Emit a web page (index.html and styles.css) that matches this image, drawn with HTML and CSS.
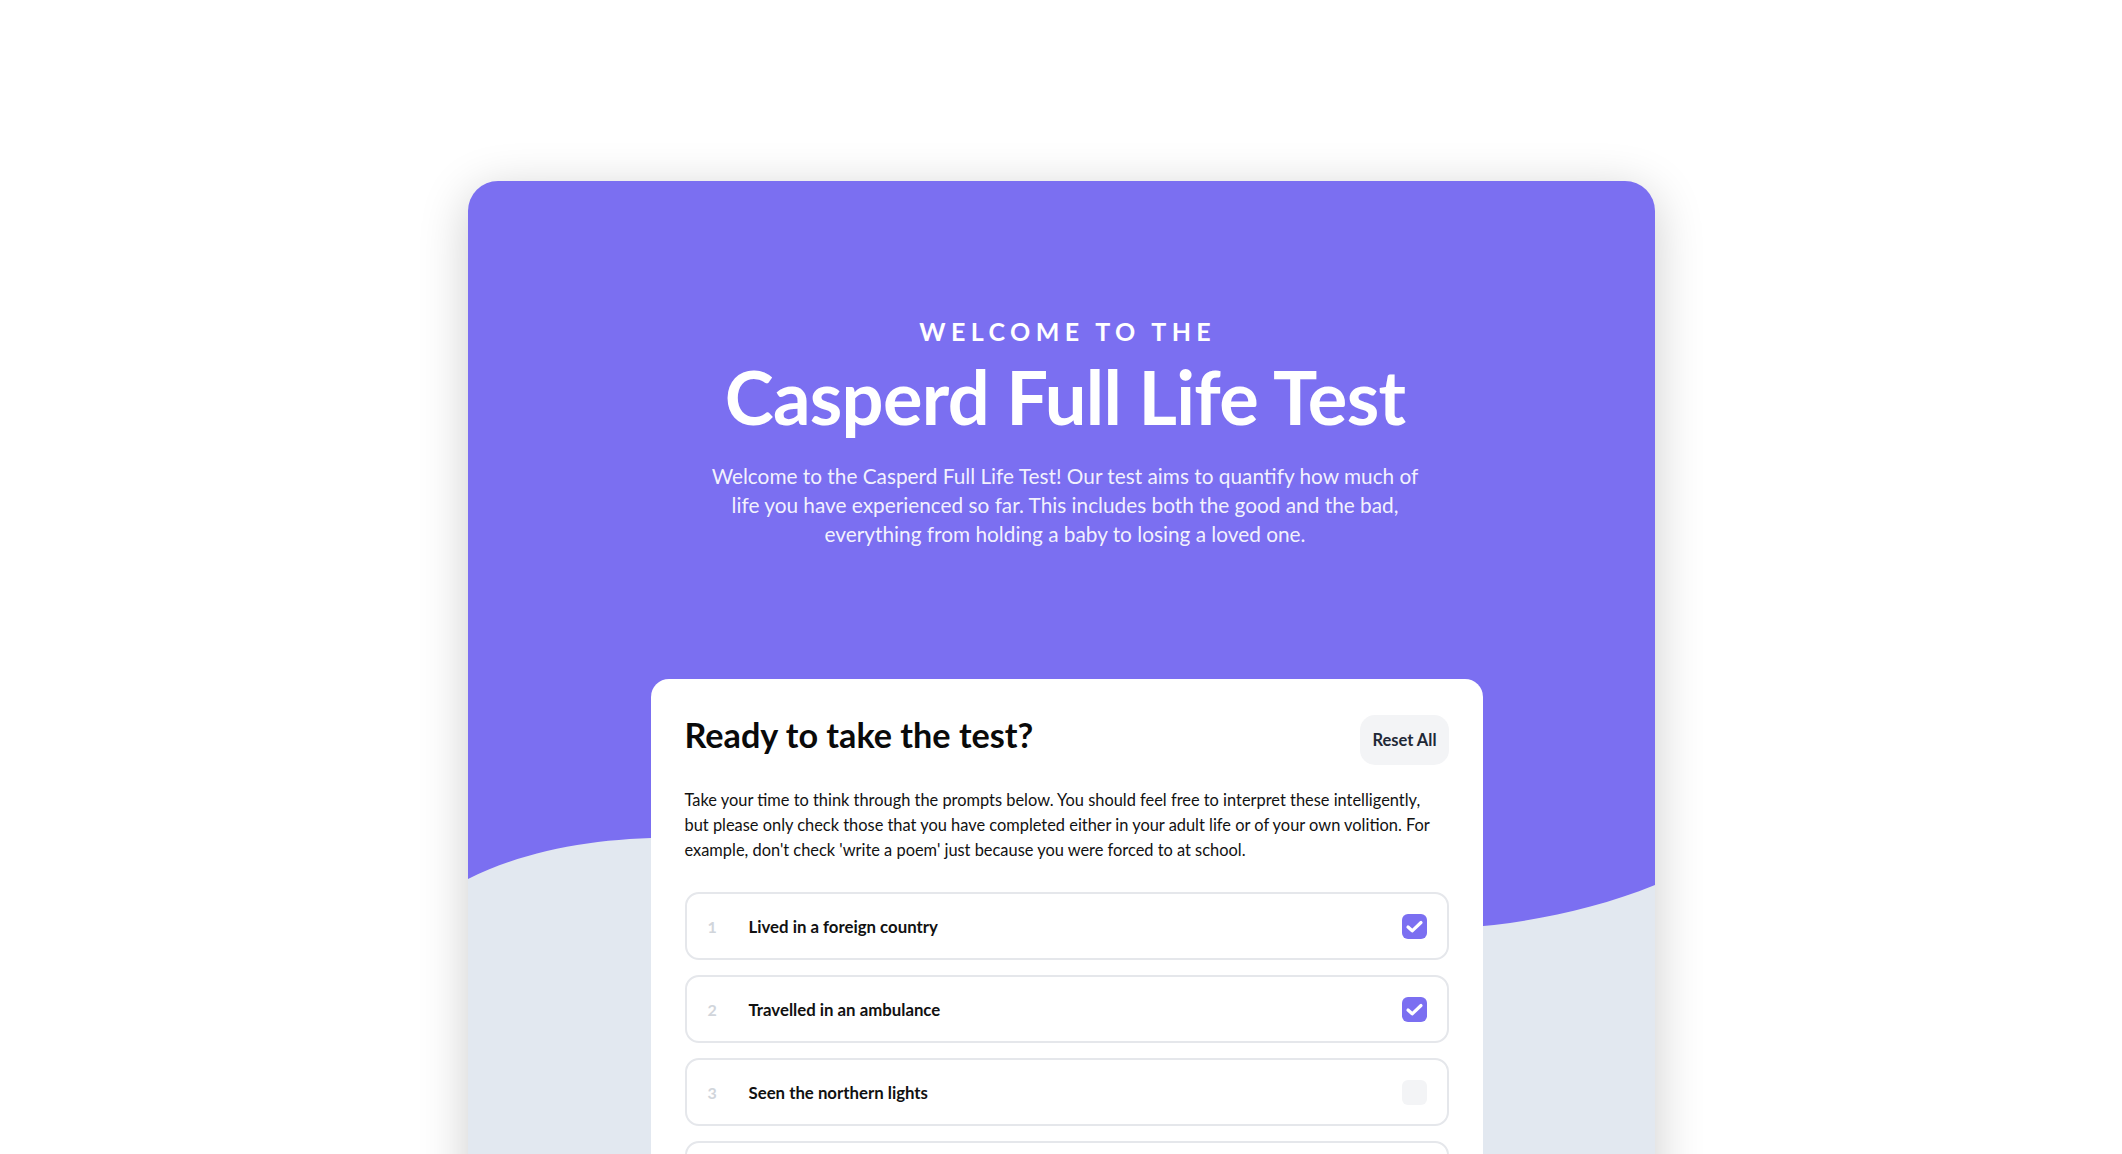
FILE: index.html
```html
<!DOCTYPE html>
<html lang="en">
<head>
<meta charset="utf-8">
<title>Casperd Full Life Test</title>
<link rel="stylesheet" href="styles.css">
</head>
<body>
<div class="frame">
  <svg class="wave" viewBox="0 0 1187 1400" preserveAspectRatio="none" aria-hidden="true">
    <path d="M0,698 C300,550 800,860 1187,704 L1187,1400 L0,1400 Z" fill="#E2E8F0"/>
  </svg>
  <header class="hero">
    <p class="eyebrow">Welcome to the</p>
    <h1 class="title">Casperd Full Life Test</h1>
    <p class="lead">Welcome to the Casperd Full Life Test! Our test aims to quantify how much of life you have experienced so far. This includes both the good and the bad, everything from holding a baby to losing a loved one.</p>
  </header>
  <main class="card">
    <div class="card-head">
      <h2 class="card-title">Ready to take the test?</h2>
      <button class="reset" type="button">Reset All</button>
    </div>
    <p class="intro">Take your time to think through the prompts below. You should feel free to interpret these intelligently, but please only check those that you have completed either in your adult life or of your own volition. For example, don't check 'write a poem' just because you were forced to at school.</p>
    <ol class="items">
      <li class="item"><span class="num">1</span><span class="label">Lived in a foreign country</span><span class="box checked"><svg viewBox="0 0 25 25"><path d="M6 13 L10.2 16.8 L19 8.5"/></svg></span></li>
      <li class="item"><span class="num">2</span><span class="label">Travelled in an ambulance</span><span class="box checked"><svg viewBox="0 0 25 25"><path d="M6 13 L10.2 16.8 L19 8.5"/></svg></span></li>
      <li class="item"><span class="num">3</span><span class="label">Seen the northern lights</span><span class="box"></span></li>
      <li class="item"><span class="num">4</span><span class="label">Written a poem</span><span class="box"></span></li>
      <li class="item"><span class="num">5</span><span class="label">Run a marathon</span><span class="box"></span></li>
    </ol>
  </main>
</div>
</body>
</html>
```
FILE: styles.css
```css
* { box-sizing: border-box; }
html, body { margin: 0; padding: 0; background: #ffffff; }
body { font-family: "Lato", "Noto Sans", sans-serif; color: #111111; overflow: hidden; }

.frame {
  position: relative;
  width: 1187px;
  margin: 181px auto 0;
  padding-bottom: 60px;
  background: #7B6FF1;
  border-radius: 30px;
  box-shadow: 0 10px 50px rgba(0, 0, 0, 0.2);
  overflow: hidden;
}

.wave {
  position: absolute;
  left: 0;
  top: 0;
  width: 100%;
  height: 1400px;
  z-index: 0;
}

.hero {
  position: relative;
  z-index: 1;
  padding: 134px 0 0 8px;
  text-align: center;
  color: #ffffff;
}

.eyebrow {
  margin: 0;
  font-size: 25px;
  line-height: 32px;
  font-weight: 700;
  letter-spacing: 5.4px;
  text-transform: uppercase;
  padding-left: 5.4px;
}

.title {
  margin: 8px 0 0;
  font-size: 74px;
  line-height: 84px;
  font-weight: 700;
  letter-spacing: -0.7px;
}

.lead {
  width: 716px;
  margin: 22px auto 0;
  font-size: 20.8px;
  line-height: 29px;
  color: rgba(255, 255, 255, 0.92);
}

.card {
  position: relative;
  z-index: 1;
  width: 832px;
  margin: 131px 0 0 183px;
  padding: 36px 34px 40px;
  background: #ffffff;
  border-radius: 18px;
}

.card-head {
  display: flex;
  align-items: center;
  justify-content: space-between;
}

.card-title {
  margin: 0 0 10px;
  font-size: 34.2px;
  line-height: 40px;
  font-weight: 700;
  color: #0a0a0a;
}

.reset {
  height: 50px;
  padding: 0 12px;
  border: none;
  border-radius: 15px;
  background: #F3F4F6;
  color: #1F2937;
  font-family: inherit;
  font-size: 16.5px;
  font-weight: 700;
}

.intro {
  margin: 22px 0 0;
  font-size: 16.4px;
  line-height: 25px;
  color: #111111;
}

.items {
  list-style: none;
  margin: 30px 0 0;
  padding: 0;
  display: flex;
  flex-direction: column;
  gap: 15px;
}

.item {
  display: flex;
  align-items: center;
  height: 68px;
  padding: 0 20px 0 21px;
  border: 2px solid #E5E7EB;
  border-radius: 14px;
}

.num {
  width: 41px;
  font-size: 16px;
  font-weight: 700;
  color: #D1D5DB;
}

.label {
  flex: 1;
  font-size: 16.8px;
  font-weight: 700;
  color: #111111;
}

.box {
  width: 25px;
  height: 25px;
  border-radius: 6px;
  background: #F3F4F6;
  display: flex;
  align-items: center;
  justify-content: center;
}

.box.checked { background: #7B6FF1; }

.box svg { width: 25px; height: 25px; }

.box svg path {
  fill: none;
  stroke: #ffffff;
  stroke-width: 3.2;
  stroke-linecap: round;
  stroke-linejoin: round;
}
```
